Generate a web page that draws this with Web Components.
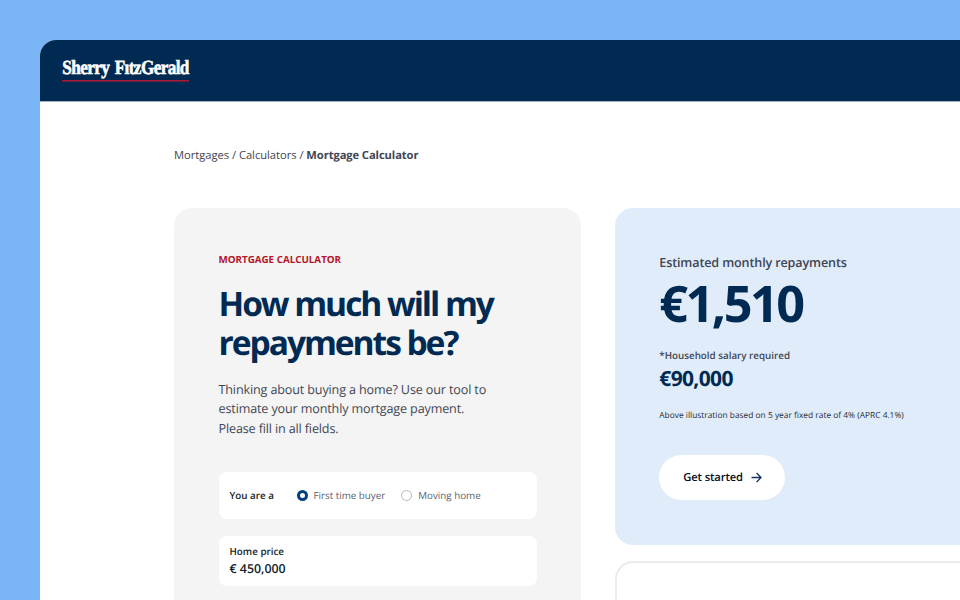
<!DOCTYPE html>
<html lang="en">
<head>
<meta charset="utf-8">
<title>Mortgage Calculator</title>
<style>
html,body{margin:0;width:960px;height:600px;overflow:hidden;background:#7ab5f5}
body{font-family:"Open Sans","Noto Sans",sans-serif;color:#3f4653;text-rendering:geometricPrecision}
</style>
</head>
<body>
<mortgage-page></mortgage-page>
<script>
const define = (name, html) => {
  const template = document.createElement('template');
  template.innerHTML = html;
  customElements.define(name, class extends HTMLElement {
    constructor() {
      super();
      this.attachShadow({ mode: 'open' }).append(template.content.cloneNode(true));
    }
  });
};

define('brand-logo', `
<style>:host{display:block;width:127px;height:25px}svg{display:block;overflow:visible}text{font:bold 20px "Liberation Serif",serif;fill:#fff;stroke:#fff;stroke-width:.6;letter-spacing:-.7px;word-spacing:2px}</style>
<svg width="127" height="25" viewBox="0 0 127 25">
  <text x="0.3" y="17" textLength="126.5" lengthAdjust="spacingAndGlyphs">Sherry FıtzGerald</text>
  <rect x="0" y="23" width="127" height="1.6" fill="#a51c36"/>
</svg>`);

define('site-header', `
<style>:host{display:flex;box-sizing:border-box;height:62px;padding:17px 22px;background:#002a52;border-bottom:1px solid #a3b0c6}</style>
<brand-logo></brand-logo>`);

define('bread-crumbs', `
<style>:host{display:block;font-size:11.2px;line-height:18px;letter-spacing:-.03px}b{font-weight:700;letter-spacing:-.09px}</style>
<span>Mortgages / Calculators / </span><b>Mortgage Calculator</b>`);

define('radio-option', `
<style>
:host{display:flex;align-items:center;gap:6px;font-size:9.8px;line-height:14px;color:#5a6070}
i{box-sizing:border-box;width:11px;height:11px;border-radius:50%;border:1px solid #b4b7bc;background:#fff}
:host([checked]) i{border:3.6px solid #00407f}
span{padding-top:1px}
</style>
<i></i><span><slot></slot></span>`);

define('field-box', `
<style>
:host{display:flex;box-sizing:border-box;width:318px;padding:0 11px;background:#fff;border-radius:8px;color:#141c28;font-size:9.8px;font-weight:600}
</style><slot></slot>`);

define('calculator-card', `
<style>
:host{display:flex;flex-direction:column;box-sizing:border-box;width:407px;height:420px;padding:44px 44.5px 0;background:#f4f4f4;border-radius:18px}
.eyebrow{font-size:9.8px;line-height:16px;font-weight:700;color:#b5152b}
h1{margin:16px 0 0;font-size:33.6px;line-height:39px;font-weight:700;letter-spacing:-2.06px;color:#002a52;white-space:nowrap}
p{margin:18.1px 0 0;font-size:12.6px;line-height:19.5px;letter-spacing:-.145px;white-space:nowrap}
field-box{flex:none}
.who{height:47px;align-items:center;margin-top:33.4px}
.who b{width:67px;font-weight:600}
.who radio-option{font-weight:400}
.who radio-option+radio-option{margin-left:16px}
.price{height:50.5px;margin-top:17px;flex-direction:column;justify-content:center;line-height:16px}
.price strong{font-size:12.4px;line-height:18px;font-weight:600}
</style>
<div class="eyebrow">MORTGAGE CALCULATOR</div>
<h1>How much will my<br>repayments be?</h1>
<p>Thinking about buying a home? Use our tool to<br>estimate your monthly mortgage payment.<br>Please fill in all fields.</p>
<field-box class="who"><b>You are a</b><radio-option checked>First time buyer</radio-option><radio-option>Moving home</radio-option></field-box>
<field-box class="price"><span>Home price</span><strong>€ 450,000</strong></field-box>`);

define('pill-button', `
<style>
:host{display:flex;align-items:center;box-sizing:border-box;width:126px;height:45px;padding-left:24px;gap:8px;border-radius:23px;background:#fff;color:#050d18;font-size:11.2px;font-weight:600;letter-spacing:-.12px;white-space:nowrap}
svg{display:block}
</style>
<span><slot></slot></span>
<svg width="11" height="11" viewBox="0 0 11 11" fill="none" stroke="#12365f" stroke-width="1.3"><path d="M.5 5.5H10M5.6 1l4.4 4.5L5.6 10"/></svg>`);

define('result-card', `
<style>
:host{display:flex;flex-direction:column;align-items:flex-start;box-sizing:border-box;height:337px;padding:46px 0 0 44.3px;background:#e0ecfa;border-radius:18px 0 0 18px;white-space:nowrap}
.label{font-size:12.6px;line-height:18px;font-weight:600;letter-spacing:-.145px}
.amount{font-size:50.4px;line-height:58px;font-weight:700;letter-spacing:-2.55px;color:#002a52;margin-top:2.8px}
.sub{font-size:9.8px;line-height:14px;font-weight:600;margin-top:16.7px}
.salary{font-size:21px;line-height:26px;font-weight:700;letter-spacing:-.65px;color:#002a52;margin-top:3px}
.note{font-size:8.4px;line-height:12px;color:#252c38;margin-top:18px}
pill-button{margin-top:32.5px}
</style>
<div class="label">Estimated monthly repayments</div>
<div class="amount">€1,510</div>
<div class="sub">*Household salary required</div>
<div class="salary">€90,000</div>
<div class="note">Above illustration based on 5 year fixed rate of 4% (APRC 4.1%)</div>
<pill-button>Get started</pill-button>`);

define('outline-card', `
<style>:host{display:block;box-sizing:border-box;height:100px;border:2px solid #ebebeb;border-right:0;border-radius:18px 0 0 0;background:#fff}</style>`);

define('mortgage-page', `
<style>
:host{display:block;box-sizing:border-box;height:600px;padding:40px 0 0 40px;overflow:hidden}
.window{height:560px;background:#fff;border-radius:16px 0 0 0;overflow:hidden}
main{padding:45px 0 0 134px}
.columns{display:grid;grid-template-columns:407px 1fr;gap:34px;margin-top:42.7px;align-items:start}
.right{display:grid;gap:16px}
</style>
<div class="window">
<site-header></site-header>
<main>
<bread-crumbs></bread-crumbs>
<div class="columns"><calculator-card></calculator-card><div class="right"><result-card></result-card><outline-card></outline-card></div></div>
</main>
</div>`);
</script>
</body>
</html>
